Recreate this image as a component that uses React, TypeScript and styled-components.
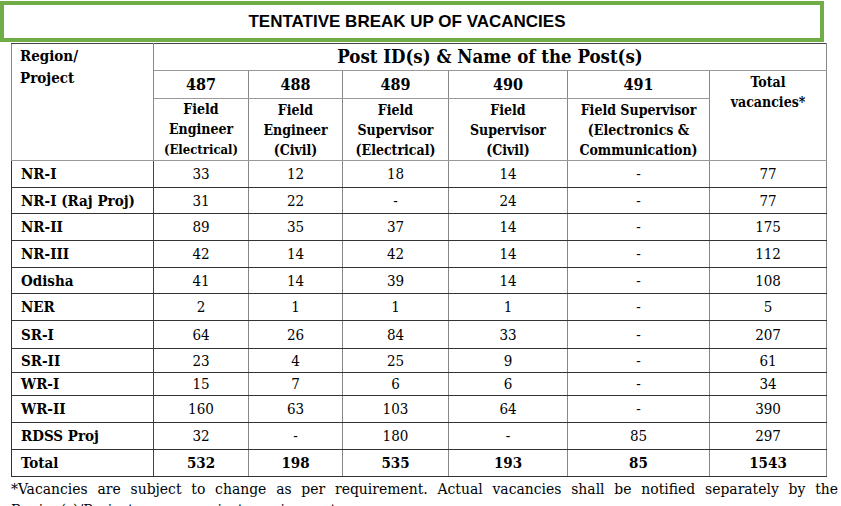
import React from "react";
import styled, { createGlobalStyle } from "styled-components";

const Global = createGlobalStyle`
  html, body { margin: 0; padding: 0; background: #fff; }
  body { font-family: "DejaVu Serif", serif; color: #000; }
`;

const Page = styled.div`
  width: 841px;
  height: 506px;
  overflow: hidden;
  padding-top: 1px;
  box-sizing: border-box;
`;

const TitleBox = styled.div`
  width: 824px;
  height: 41px;
  box-sizing: border-box;
  border: 4px solid #70ad47;
  display: flex;
  align-items: center;
  justify-content: center;
  padding: 1px 10px 0 0;
  font-family: "Liberation Sans", Arial, sans-serif;
  font-weight: 700;
  font-size: 17px;
`;

const Body = styled.div`
  padding-left: 11px;
  padding-top: 1px;
`;

const Table = styled.table`
  border-collapse: collapse;
  table-layout: fixed;
  width: 815px;
  font-family: "DejaVu Serif", serif;
  font-stretch: condensed;
  border: 1px solid #333;
  border-top-color: #aaa;
`;

const HCell = styled.th<{ $size?: number; $top?: boolean; $left?: boolean; $lh?: number }>`
  border: 1px solid #444;
  border-left-color: #888;
  border-right-color: #888;
  border-bottom-color: #999;
  font-weight: 700;
  font-size: ${(p) => p.$size ?? 14}px;
  line-height: ${(p) => p.$lh ?? 20}px;
  text-align: ${(p) => (p.$left ? "left" : "center")};
  vertical-align: ${(p) => (p.$top ? "top" : "middle")};
  padding: ${(p) => (p.$left ? "1px 8px" : "0 2px")};
  box-sizing: border-box;
`;

const TotalHead = styled.div`
  padding-top: 1px;
`;

const Small = styled.span`
  font-size: 13px;
`;

const Row = styled.tr<{ $h: number }>`
  height: ${(p) => p.$h}px;
`;

const RegionCell = styled.td`
  border: 1px solid #333;
  border-right-color: #444;
  font-weight: 700;
  font-size: 15px;
  padding: 0 9px;
  text-align: left;
  vertical-align: middle;
`;

const NumCell = styled.td<{ $bold?: boolean }>`
  border: 1px solid #333;
  border-left-color: #888;
  border-right-color: #888;
  font-weight: ${(p) => (p.$bold ? 700 : 400)};
  font-size: 15px;
  text-align: center;
  vertical-align: middle;
  padding: 0;
`;

const Footer = styled.p`
  margin: 2px 0 0 0;
  width: 827px;
  font-family: "DejaVu Serif", serif;
  font-stretch: condensed;
  font-size: 15.5px;
  line-height: 21px;
  text-align: justify;
`;

const widths = [142, 95, 94, 106, 119, 142, 117];

const rows: { name: string; v: string[]; h: number }[] = [
  { name: "NR-I", v: ["33", "12", "18", "14", "-", "77"], h: 27 },
  { name: "NR-I (Raj Proj)", v: ["31", "22", "-", "24", "-", "77"], h: 26 },
  { name: "NR-II", v: ["89", "35", "37", "14", "-", "175"], h: 27 },
  { name: "NR-III", v: ["42", "14", "42", "14", "-", "112"], h: 27 },
  { name: "Odisha", v: ["41", "14", "39", "14", "-", "108"], h: 26 },
  { name: "NER", v: ["2", "1", "1", "1", "-", "5"], h: 27 },
  { name: "SR-I", v: ["64", "26", "84", "33", "-", "207"], h: 28 },
  { name: "SR-II", v: ["23", "4", "25", "9", "-", "61"], h: 24 },
  { name: "WR-I", v: ["15", "7", "6", "6", "-", "34"], h: 23 },
  { name: "WR-II", v: ["160", "63", "103", "64", "-", "390"], h: 27 },
  { name: "RDSS Proj", v: ["32", "-", "180", "-", "85", "297"], h: 27 },
];

const totals = ["532", "198", "535", "193", "85", "1543"];

const posts: [string, React.ReactNode][] = [
  ["487", <>Field<br />Engineer<br /><Small>(Electrical)</Small></>],
  ["488", <>Field<br />Engineer<br />(Civil)</>],
  ["489", <>Field<br />Supervisor<br />(Electrical)</>],
  ["490", <>Field<br />Supervisor<br />(Civil)</>],
  ["491", <>Field Supervisor<br />(Electronics &amp;<br />Communication)</>],
];

export default function App() {
  return (
    <Page>
      <Global />
      <TitleBox>TENTATIVE BREAK UP OF VACANCIES</TitleBox>
      <Body>
        <Table>
          <colgroup>
            {widths.map((w, i) => (
              <col key={i} style={{ width: w }} />
            ))}
          </colgroup>
          <thead>
            <Row $h={27}>
              <HCell rowSpan={3} $left $top $size={15} $lh={22}>
                Region/
                <br />
                Project
              </HCell>
              <HCell colSpan={6} $size={18.5} $lh={24}>
                Post ID(s) &amp; Name of the Post(s)
              </HCell>
            </Row>
            <Row $h={28}>
              {posts.map(([id]) => (
                <HCell key={id} $size={16}>
                  {id}
                </HCell>
              ))}
              <HCell rowSpan={2} $top $lh={20}>
                <TotalHead>
                  Total
                  <br />
                  vacancies*
                </TotalHead>
              </HCell>
            </Row>
            <Row $h={61}>
              {posts.map(([id, label]) => (
                <HCell key={id}>{label}</HCell>
              ))}
            </Row>
          </thead>
          <tbody>
            {rows.map((r) => (
              <Row key={r.name} $h={r.h}>
                <RegionCell>{r.name}</RegionCell>
                {r.v.map((x, i) => (
                  <NumCell key={i}>{x}</NumCell>
                ))}
              </Row>
            ))}
            <Row $h={27}>
              <RegionCell>Total</RegionCell>
              {totals.map((x, i) => (
                <NumCell key={i} $bold>
                  {x}
                </NumCell>
              ))}
            </Row>
          </tbody>
        </Table>
        <Footer>
          *Vacancies are subject to change as per requirement. Actual vacancies shall be notified separately by the
          Region(s)/Projects as per project requirement.
        </Footer>
      </Body>
    </Page>
  );
}
